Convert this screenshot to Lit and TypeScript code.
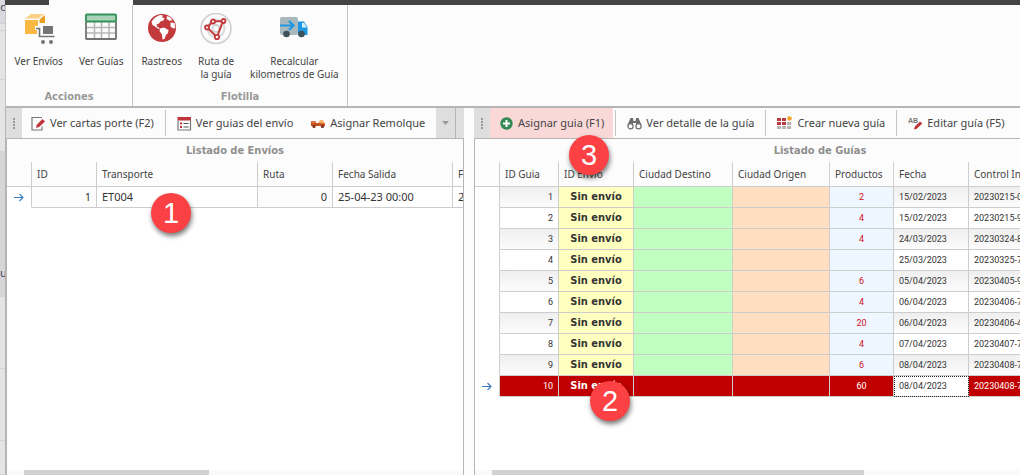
import { LitElement, html, css, svg, nothing } from "lit";
import { customElement, property } from "lit/decorators.js";
import { classMap } from "lit/directives/class-map.js";

const icons = {
  shipments: svg`<svg width="32" height="32" viewBox="0 0 32 32">
    <path d="M2 5.500L8 1h13l-5.500 4.500z" fill="#fbd184"/><path d="M2 7h13v14H2z" fill="#fbb941"/>
    <path d="M16.500 6.500L22 2v10h-5.500z" fill="#eb9f1f"/>
    <path d="M12 15h4v8h15M18 12h12v10H18z" fill="none" stroke="#fcfcfc" stroke-width="4"/>
    <path d="M20 13h10v8H20z" fill="#747474"/>
    <path d="M13 15.500h3.500v8h15" fill="none" stroke="#747474" stroke-width="1.600"/>
    <circle cx="20" cy="29" r="2" fill="#747474"/><circle cx="28" cy="29" r="2" fill="#747474"/></svg>`,
  table: svg`<svg width="32" height="32" viewBox="0 0 32 32">
    <path d="M1 14.500h30M1 20h30M9.500 9v17M16.500 9v17M24 9v17" fill="none" stroke="#b4b4b4" stroke-width="1.500"/>
    <path d="M1 9v16.500q0 .5.500.5h29q.5 0 .5-.5V9" fill="none" stroke="#737373" stroke-width="1.800"/>
    <rect x=".9" y="1.500" width="30.200" height="7" rx="1" fill="#a9d3b8" stroke="#35905a" stroke-width="1.800"/></svg>`,
  globe: svg`<svg width="32" height="32" viewBox="0 0 32 32"><circle cx="16" cy="15" r="14" fill="#c23a3c"/>
    <path d="M5.500 9Q8 4 14 2l3 .5-1 2 2.500.5-1 2.500-3 1-1.500 2-2.500 1 .5 2 3 2-1.500.5L9 13.500 6.500 12z" fill="#fcfcfc"/>
    <path d="M14 15.500l4-1 4.500 2.500-.5 3-2 2-1.500 4-2 .5-.5-5-2.500-3.500z" fill="#fcfcfc"/>
    <path d="M21 3l3 1 2.500 3-2.500 1-3.500-2zM24.500 9.500l4 .5.800 5-2.300.5-2.500-2z" fill="#fcfcfc"/></svg>`,
  route: svg`<svg width="32" height="32" viewBox="0 0 32 32" fill="none"><circle cx="16" cy="15.500" r="15" stroke="#cfcfcf" stroke-width="1.600"/>
    <circle cx="16" cy="15.500" r="8.500" stroke="#dadada" stroke-width="2"/><circle cx="16" cy="15.500" r="3.500" stroke="#cfcfcf" stroke-width="1.800"/>
    <path d="M7 14.500l6-6 10-.5-6 16z" stroke="#c23a3c" stroke-width="2"/>
    <g fill="#fcfcfc" stroke="#c23a3c" stroke-width="1.800"><circle cx="7" cy="14.500" r="2"/><circle cx="13" cy="8.500" r="2"/><circle cx="23.500" cy="8" r="2"/><circle cx="17" cy="24" r="2.200"/></g></svg>`,
  truck: svg`<svg width="32" height="32" viewBox="0 0 32 32"><rect x="2" y="4" width="18" height="18" rx="2" fill="#a9b8bd"/>
    <path d="M20 8.500h6l3.500 5.500v8H20z" fill="#1e96e0"/><path d="M24 10h2l3 4.500h-5z" fill="#d5effb"/>
    <path d="M2 12.500h13M11 8l4.500 4.500L11 17" fill="none" stroke="#1e96e0" stroke-width="2.200"/>
    <circle cx="8.500" cy="21" r="3.300" fill="#3f515b"/><circle cx="23.500" cy="21" r="3.300" fill="#3f515b"/></svg>`,
  edit: svg`<svg width="15" height="15" viewBox="0 0 15 15"><path d="M11 10.500v3.500H1V1.500h10" fill="none" stroke="#777" stroke-width="1.200"/>
    <path d="M5 12l.8-3.300L11.500 3l2.500 2.400-5.900 5.600z" fill="#bf3439"/></svg>`,
  list: svg`<svg width="15" height="15" viewBox="0 0 15 15"><path d="M1 4.500V14h12.500V4.500" fill="none" stroke="#777" stroke-width="1.200"/>
    <path d="M.5 1h13.500v3.500H.5z" fill="#bf3439"/><path d="M3 6.500h2v2H3zM3 10h2v2H3z" fill="#bf3439"/><path d="M6.500 7.500h5M6.500 11h5" stroke="#555" stroke-width="1.200"/></svg>`,
  trailer: svg`<svg width="15" height="15" viewBox="0 0 15 15"><path d="M0 6q0-1 1-1h3q1 0 1 2h9v3H0z" fill="#c4501e"/>
    <path d="M7 7l2-3h3l2 3.500z" fill="#f2b06a"/><path d="M1.500 5.500h2v1.500h-2z" fill="#f0a070"/>
    <circle cx="3" cy="10.500" r="1.600" fill="#7c3020"/><circle cx="11.500" cy="10.500" r="1.600" fill="#7c3020"/></svg>`,
  add: svg`<svg width="15" height="15" viewBox="0 0 15 15"><circle cx="7.500" cy="7.500" r="6.200" fill="#348a55"/><path d="M7.500 4v7M4 7.500h7" stroke="#fff" stroke-width="2"/></svg>`,
  find: svg`<svg width="15" height="15" viewBox="0 0 15 15"><path d="M3.500 2h2.500l.5 3h2L9 2h2.500l3 7H9V7H6v2H.5z" fill="#6c6c6c"/>
    <g fill="#fcfcfc" stroke="#6c6c6c" stroke-width="1.200"><circle cx="3.500" cy="10.200" r="2.600"/><circle cx="11.500" cy="10.200" r="2.600"/></g></svg>`,
  create: svg`<svg width="16" height="15" viewBox="0 0 16 15"><path d="M0 2h4v3H0zM5 2h4v3H5zM0 6h4v3H0zM5 6h4v3H5z" fill="#b83a3e"/>
    <path d="M10 6h4v3h-4zM0 10h4v3H0zM5 10h4v3H5zM10 10h4v3h-4z" fill="#b5b5b5"/><circle cx="12.500" cy="2.500" r="2.300" fill="#f0a52a"/></svg>`,
  rename: svg`<svg width="15" height="15" viewBox="0 0 15 15"><text x="0" y="7" font-family="Liberation Sans" font-weight="bold" font-size="7" fill="#777">AB</text>
    <path d="M6 13.500l.7-2.800L12 5.500l2.300 2-5.500 5.300z" fill="#bf3439"/></svg>`,
  arrow: svg`<svg width="10" height="9" viewBox="0 0 10 9"><path d="M0 4.500h9M5.500 1L9 4.500 5.500 8" fill="none" stroke="#3c7cc4" stroke-width="1.100"/></svg>`,
};
type IconName = keyof typeof icons;

const shared = css`
  button { font: inherit; color: inherit; background: none; border: 0; margin: 0; padding: 0; }
  svg { display: block; flex: none; }
`;

@customElement("ribbon-group")
class RibbonGroup extends LitElement {
  @property() caption = "";
  @property({ attribute: false }) items: { icon: IconName; lines: string[] }[] = [];
  static styles = [shared, css`
    :host { display: flex; flex-direction: column; box-sizing: border-box; border-right: 1px solid #c4c4c4; }
    .items { display: flex; flex: 1; justify-content: center; }
    button { display: flex; flex-direction: column; align-items: center; gap: 10px; padding: 8px 8px 0; line-height: 13px; white-space: nowrap; }
    h2 { margin: 0; padding-bottom: 2px; font: bold 11px/14px "DejaVu Sans Condensed", sans-serif; text-align: center; color: #999; }
  `];
  render() {
    return html`<div class="items">${this.items.map((i) => html`<button type="button">${icons[i.icon]}<span>${i.lines.map((l, n) => html`${n ? html`<br>` : nothing}${l}`)}</span></button>`)}</div>
      <h2>${this.caption}</h2>`;
  }
}

interface Tool { icon: IconName; label: string; active?: boolean; sep?: boolean }

@customElement("tool-bar")
class ToolBar extends LitElement {
  @property({ attribute: false }) items: Tool[] = [];
  @property({ type: Boolean }) overflow = false;
  static styles = [shared, css`
    :host { display: flex; height: 30px; font-size: 11px; border-bottom: 1px solid #b5b5b5; overflow: hidden; background: #fcfcfc; }
    .grip { flex: none; width: 16px; background: #dedede; display: grid; place-content: center; gap: 1px; }
    .grip i { width: 2px; height: 2px; background: #999; }
    .tool { flex: none; display: flex; align-items: center; gap: 4px; padding: 0 9px; white-space: nowrap; }
    .active { background: #fad8d8; }
    .sep { flex: none; width: 1px; margin: 2px 2px 2px 2px; background: #c4c4c4; }
    .more { flex: none; width: 20px; margin-left: auto; background: #dedede; display: grid; place-content: center; border-right: 1px solid #b5b5b5; }
    .tail { flex: none; width: 8px; background: #dedede; }
  `];
  render() {
    return html`<div class="grip"><i></i><i></i><i></i><i></i></div>
      ${this.items.map((t) => html`<button type="button" class=${classMap({ tool: true, active: !!t.active })}>${icons[t.icon]}${t.label}</button>${t.sep ? html`<span class="sep"></span>` : nothing}`)}
      ${this.overflow ? html`<button type="button" class="more" aria-label="Más"><svg width="7" height="4"><path d="M0 0h7L3.500 4z" fill="#999"/></svg></button><span class="tail"></span>` : nothing}`;
  }
}

const guias = [
  ["2", "15/02/2023", "20230215-0"], ["4", "15/02/2023", "20230215-9"], ["4", "24/03/2023", "20230324-8"],
  ["", "25/03/2023", "20230325-7"], ["6", "05/04/2023", "20230405-9"], ["4", "06/04/2023", "20230406-7"],
  ["20", "06/04/2023", "20230406-4"], ["4", "07/04/2023", "20230407-7"], ["6", "08/04/2023", "20230408-7"],
  ["60", "08/04/2023", "20230408-7"],
];

@customElement("app-root")
class AppRoot extends LitElement {
  static styles = [shared, css`
    :host { display: flex; position: relative; height: 100vh; overflow: hidden; font: 10px/14px "Noto Sans", sans-serif; color: #444; background: #fcfcfc; }
    .behind { flex: none; width: 5px; overflow: hidden; display: grid; grid-template-rows: 24px 7px 49px 72px 145px 72px 72px 1fr; background: #e5e5e5; color: #446; }
    .behind div { box-sizing: border-box; border-bottom: 1px solid #d2d2d2; direction: rtl; font-size: 11px; }
    .behind .tint { background: #d8dae0; }
    .behind .low { background: #d6d6d8; padding-top: 114px; }
    .window { flex: 1; min-width: 0; display: flex; flex-direction: column; }
    .tabs { flex: none; height: 5px; display: flex; background: #444; }
    .tab { margin-left: 44px; width: 84px; background: #fcfcfc; }
    .ribbon { flex: none; height: 101px; display: flex; border-bottom: 2px solid #b5b5b5; border-left: 1px solid #c4c4c4; }
    .acciones { width: 127px; }
    .flotilla { width: 215px; }
    .work { flex: 1; min-height: 0; display: flex; gap: 10px; border-left: 1px solid #b5b5b5; }
    .panel { display: flex; flex-direction: column; min-width: 0; }
    .left { flex: 0 0 458px; }
    .right { flex: 1; }
    .body { flex: 1; min-height: 0; overflow: hidden; border-left: 1px solid #b5b5b5; display: flex; flex-direction: column; background: #fff; }
    .left .body { border-right: 1px solid #b5b5b5; }
    .wide { min-width: 690px; }
    h3 { margin: 0; height: 23px; font: bold 11px/23px "DejaVu Sans Condensed", sans-serif; text-align: center; color: #8f8f8f; background: #fcfcfc; }
    table { table-layout: fixed; border-collapse: separate; border-spacing: 0; width: 690px; }
    th, td { box-sizing: border-box; height: 21px; padding: 0 5px; border: 0 solid #cdcdcd; border-width: 0 1px 1px 0; font-weight: normal; text-align: left; white-space: nowrap; overflow: hidden; line-height: 14px; }
    th { height: 25px; background: #fcfcfc; }
    tbody td { color: #333; font-size: 11px; }
    tbody .mark { border-bottom-color: transparent; padding: 0 7px; background: #fff; }
    .num { text-align: right; background: #fcfcfc; }
    .small td { font: 9px/14px Roboto, sans-serif; }
    .small tr:nth-child(even) td { background: #fff; }
    .small tr:nth-child(odd) td { background: linear-gradient(#efefef, #fcfcfc); }
    .small tr td.mark { background: #fff; }
    .small tr td.envio { background: #ffffc0; font: bold 11px/14px "DejaVu Sans Condensed", sans-serif; text-align: center; }
    .small tr td.destino { background: #c0ffc0; }
    .small tr td.origen { background: #ffdfc0; }
    .small tr td.prod { background: #eef7ff; color: #d01020; text-align: center; }
    .small tr.sel td:not(.mark) { background: #c00000; color: #fff; }
    .small tr.sel td.focus:not(.mark) { background: #fff; color: #333; outline: 1px dotted #222; outline-offset: -1px; }
    .scroll { margin-top: auto; height: 5px; background: #fafafa; padding-left: 17px; }
    .thumb { height: 5px; background: #d2d2d2; }
    .t1 { width: 185px; }
    .t2 { width: 372px; }
    .step { position: absolute; width: 40px; height: 40px; border-radius: 50%; background: #fb4143; color: #fff; box-shadow: 1px 3px 5px #0008; font: 29px/40px "Liberation Sans", sans-serif; text-align: center; }
    .s1 { left: 151px; top: 193px; }
    .s2 { left: 590px; top: 381px; }
    .s3 { left: 569px; top: 135px; }
  `];

  render() {
    return html`
      <div class="behind" aria-hidden="true"><div class="tint">o</div><div></div><div></div><div></div><div class="low">u</div><div></div><div></div><div></div></div>
      <div class="window">
        <div class="tabs"><div class="tab"></div></div>
        <div class="ribbon">
          <ribbon-group class="acciones" caption="Acciones" .items=${[{ icon: "shipments", lines: ["Ver Envíos"] }, { icon: "table", lines: ["Ver Guías"] }]}></ribbon-group>
          <ribbon-group class="flotilla" caption="Flotilla" .items=${[{ icon: "globe", lines: ["Rastreos"] }, { icon: "route", lines: ["Ruta de", "la guía"] }, { icon: "truck", lines: ["Recalcular", "kilometros de Guía"] }]}></ribbon-group>
        </div>
        <div class="work">
          <section class="panel left">
            <tool-bar overflow .items=${[{ icon: "edit", label: "Ver cartas porte (F2)", sep: true }, { icon: "list", label: "Ver guias del envío" }, { icon: "trailer", label: "Asignar Remolque" }]}></tool-bar>
            <div class="body">
              <h3>Listado de Envíos</h3>
              <table>
                <colgroup><col style="width:25px"><col style="width:65px"><col style="width:161px"><col style="width:75px"><col style="width:120px"><col></colgroup>
                <thead><tr><th></th><th>ID</th><th>Transporte</th><th>Ruta</th><th>Fecha Salida</th><th>Fecha</th></tr></thead>
                <tbody><tr><td class="mark">${icons.arrow}</td><td class="num">1</td><td>ET004</td><td class="num">0</td><td>25-04-23 00:00</td><td>25-04-23</td></tr></tbody>
              </table>
              <div class="scroll"><div class="thumb t1"></div></div>
            </div>
          </section>
          <section class="panel right">
            <tool-bar .items=${[{ icon: "add", label: "Asignar guia (F1)", active: true, sep: true }, { icon: "find", label: "Ver detalle de la guía", sep: true }, { icon: "create", label: "Crear nueva guía", sep: true }, { icon: "rename", label: "Editar guía (F5)" }]}></tool-bar>
            <div class="body">
              <h3 class="wide">Listado de Guías</h3>
              <table>
                <colgroup><col style="width:25px"><col style="width:59px"><col style="width:75px"><col style="width:99px"><col style="width:97px"><col style="width:64px"><col style="width:75px"><col></colgroup>
                <thead><tr><th></th><th>ID Guia</th><th>ID Envio</th><th>Ciudad Destino</th><th>Ciudad Origen</th><th>Productos</th><th>Fecha</th><th>Control Interno</th></tr></thead>
                <tbody class="small">${guias.map(([p, f, c], i) => {
                  const sel = i === guias.length - 1;
                  return html`<tr class=${classMap({ sel })}><td class="mark">${sel ? icons.arrow : nothing}</td><td class="num">${i + 1}</td><td class="envio">Sin envío</td><td class="destino"></td><td class="origen"></td><td class="prod">${p}</td><td class=${classMap({ focus: sel })}>${f}</td><td>${c}</td></tr>`;
                })}</tbody>
              </table>
              <div class="scroll"><div class="thumb t2"></div></div>
            </div>
          </section>
        </div>
      </div>
      <div class="step s1">1</div><div class="step s2">2</div><div class="step s3">3</div>`;
  }
}
